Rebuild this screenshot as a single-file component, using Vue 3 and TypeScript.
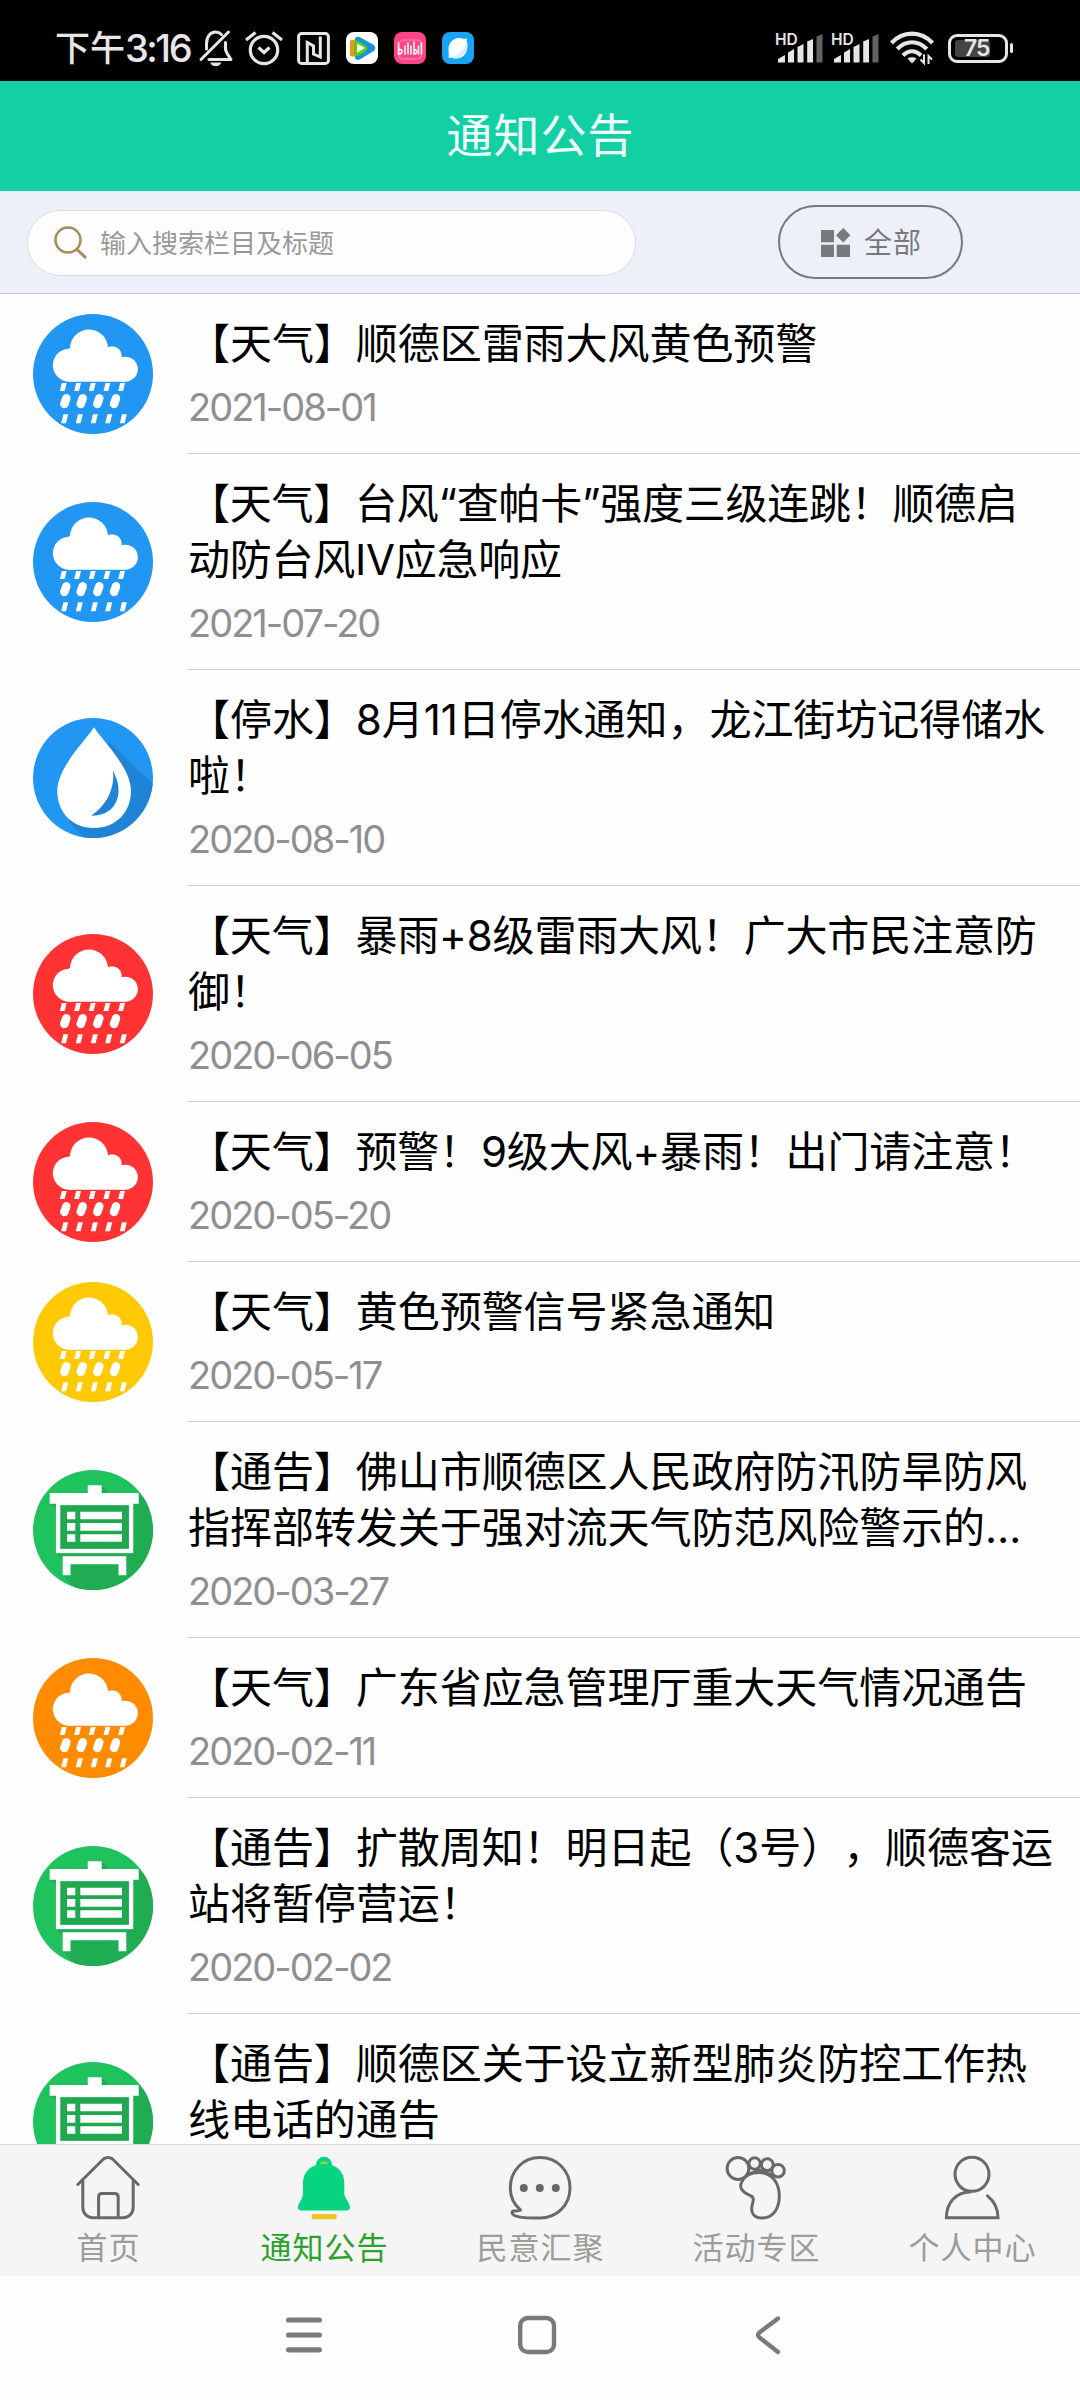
<script setup lang="ts">
type IconKind = 'rain' | 'drop' | 'board'

interface Notice {
  kind: IconKind
  color: string
  lines: string[]
  date: string
  tracking?: number
}

interface Tab {
  id: string
  label: string
}

const BLUE = '#2196f3'
const RED = '#ff3333'
const YELLOW = '#ffc905'
const ORANGE = '#ff8c00'
const GREEN = '#1fc25c'

const notices: Notice[] = [
  { kind: 'rain', color: BLUE, lines: ['【天气】顺德区雷雨大风黄色预警'], date: '2021-08-01' },
  { kind: 'rain', color: BLUE, lines: ['【天气】台风“查帕卡”强度三级连跳！顺德启', '动防台风IV应急响应'], date: '2021-07-20', tracking: -0.25 },
  { kind: 'drop', color: BLUE, lines: ['【停水】8月11日停水通知，龙江街坊记得储水', '啦！'], date: '2020-08-10' },
  { kind: 'rain', color: RED, lines: ['【天气】暴雨+8级雷雨大风！广大市民注意防', '御！'], date: '2020-06-05', tracking: -0.15 },
  { kind: 'rain', color: RED, lines: ['【天气】预警！9级大风+暴雨！出门请注意！'], date: '2020-05-20', tracking: -0.15 },
  { kind: 'rain', color: YELLOW, lines: ['【天气】黄色预警信号紧急通知'], date: '2020-05-17' },
  { kind: 'board', color: GREEN, lines: ['【通告】佛山市顺德区人民政府防汛防旱防风', '指挥部转发关于强对流天气防范风险警示的…'], date: '2020-03-27' },
  { kind: 'rain', color: ORANGE, lines: ['【天气】广东省应急管理厅重大天气情况通告'], date: '2020-02-11' },
  { kind: 'board', color: GREEN, lines: ['【通告】扩散周知！明日起（3号），顺德客运', '站将暂停营运！'], date: '2020-02-02' },
  { kind: 'board', color: GREEN, lines: ['【通告】顺德区关于设立新型肺炎防控工作热', '线电话的通告'], date: '' },
]

const tabs: Tab[] = [
  { id: 'home', label: '首页' },
  { id: 'notice', label: '通知公告' },
  { id: 'opinion', label: '民意汇聚' },
  { id: 'activity', label: '活动专区' },
  { id: 'profile', label: '个人中心' },
]
const activeTab = 'notice'

const shortTop = [30.3, 44.7, 59.3, 74, 88.7]
const longMid = [32.3, 48.7, 65.3, 82]
const shortLow = [31.7, 46.3, 61.3, 75.7, 90.3]
</script>

<template>
  <div class="screen">
    <header class="status">
      <div class="status-left">
        <span class="clock">下午<b>3:16</b></span>
        <svg class="s-mute" width="34" height="36" viewBox="0 0 34 36" fill="none" stroke="#e6e6e6" stroke-width="3" stroke-linecap="round" stroke-linejoin="round">
          <path d="M7.500 19V14C7.500 6.500 11.500 2 16.500 2C19 2 21 3 22.500 4.500M26.500 12.500V19C27 23 30 26 32 29.500H10M2 29.500L29.500 2" />
          <path d="M11 32.500H22.500C21 35.500 19 36 16.700 36C14.500 36 12.500 35.500 11 32.500Z" fill="#e6e6e6" stroke="none" />
        </svg>
        <svg class="s-alarm" width="38" height="35" viewBox="0 0 38 35" fill="none" stroke="#e6e6e6" stroke-width="3.200">
          <circle cx="19" cy="19" r="13.700" />
          <path d="M13.500 16.500L19 21.500L24.500 16.500M1 9L10.500 1.500M37 9L27.500 1.500" />
        </svg>
        <svg class="s-nfc" width="33" height="33" viewBox="0 0 33 33" fill="none" stroke="#e6e6e6" stroke-width="3">
          <rect x="1.600" y="1.600" width="29.800" height="29.800" rx="3" />
          <path d="M10.300 31V10.500L16.500 14V22L23.300 25V4.500" />
        </svg>
        <svg class="s-app" width="32" height="32" viewBox="0 0 32 32">
          <rect width="32" height="32" rx="8" fill="#fff" />
          <path d="M9 7C9 4.500 12 4 14.500 5.500L27 12.500C30 14.500 30 17.500 27 19.500L14.500 27C12 28.500 9 28 9 25.500Z" fill="#1793dc" />
          <path d="M4 10C4 8 6 7.500 8 8V24.500C6 25 4 24.500 4 22.500Z" fill="#ff8a1e" />
          <path d="M8 8C12 8.500 18 12 20.500 14.500C21.500 15.500 21.500 17 20.500 18C18 21 12 24.500 8 24.500Z" fill="#54cf10" />
          <path d="M11 11.500L19 16L11 20.800Z" fill="#fff" />
        </svg>
        <svg class="s-app" width="32" height="32" viewBox="0 0 32 32" fill="none">
          <rect width="32" height="32" rx="8" fill="#fb4687" />
          <rect x="5" y="8" width="22" height="19" rx="4" stroke="#ff6b9e" stroke-width="2" />
          <path d="M4.500 11V22C9 22 9 17 5.500 17.500M11 14V22M14 11V22M17 14V22M20 10V22C23.500 22 23.500 17.500 20.500 17.500M24.500 14V22M27.500 11V22" stroke="#fff" stroke-width="1.500" stroke-linecap="round" />
        </svg>
        <svg class="s-app" width="32" height="32" viewBox="0 0 32 32">
          <rect width="32" height="32" rx="8" fill="#18a5f8" />
          <path d="M6.500 17C6.500 11 11 6 17 6C19.500 6 21 6.500 22 7.200C23.500 6.200 25 6.500 24.800 8C24.600 9.300 25.500 11 25.500 14C25.500 21 21 26.500 14.500 26.500C12 26.500 10.500 26 9 25.500C7.500 26.500 6 26 6.600 24C7.200 22 6.500 20 6.500 17Z" fill="#fff" />
          <path d="M9 25.500C16 24 23 17 24.500 9C28 19 19 29 9 25.500Z" fill="#d9efff" />
        </svg>
      </div>
      <div class="status-right">
        <svg v-for="n in 2" :key="n" class="s-signal" width="48" height="32" viewBox="0 0 48 32" fill="#e6e6e6">
          <text x="-1" y="12.500" class="hd">HD</text>
          <path d="M2 30.500V27L9 23V30.500ZM12 30.500V20.500L18 17V30.500ZM21.500 30.500V15L27.500 12V30.500ZM31.200 30.500V9.500L37 7V30.500Z" />
          <path d="M40.500 30.500V4.500L46.500 2V30.500Z" fill="#626262" />
        </svg>
        <svg class="s-wifi" width="44" height="34" viewBox="0 0 44 34" fill="none" stroke="#e6e6e6" stroke-width="4.200">
          <path d="M1.500 12C13-.5 31-.5 42.500 12M7.200 18C16 9 28 9 36.800 18M13 24.500C18.500 19 25.500 19 31 24.500" />
          <path d="M17.500 27.500C20 25.800 24 25.800 26.500 27.500L22 32.500Z" fill="#e6e6e6" stroke="none" />
          <path d="M34 23.500V32L30.500 28.500M38.500 33V25L42 28.500" stroke-width="2" />
        </svg>
        <div class="battery"><span class="cell"><i></i><em>75</em></span><span class="nub"></span></div>
      </div>
    </header>

    <h1 class="title">通知公告</h1>

    <div class="search">
      <div class="field">
        <svg width="32" height="34" viewBox="0 0 32 34" fill="none" stroke="#a68c58" stroke-width="2.500">
          <circle cx="14" cy="14" r="12.500" />
          <path d="M22.500 23L32 32" stroke-width="3" />
        </svg>
        <span>输入搜索栏目及标题</span>
      </div>
      <div class="filter">
        <svg width="30" height="30" viewBox="0 0 30 30" fill="#777b7b">
          <path d="M0 3H13V15.300H0ZM0 17.700H13V30H0ZM15.700 17.700H29V30H15.700ZM22.300 1L29.300 8.300L22.300 15.500L15 8.300Z" />
        </svg>
        <span>全部</span>
      </div>
    </div>

    <main class="list">
      <article v-for="(item, i) in notices" :key="i" class="row">
        <svg class="badge" viewBox="0 0 120 120">
          <defs>
            <clipPath :id="'round' + i"><circle cx="60" cy="60" r="60" /></clipPath>
          </defs>
          <g :clip-path="`url(#round${i})`">
            <rect width="120" height="120" :fill="item.color" />
            <g v-if="item.kind === 'rain'" fill="#fff">
              <circle cx="56" cy="34.500" r="19" />
              <circle cx="36.300" cy="51.200" r="16.500" />
              <circle cx="79" cy="42" r="9.800" />
              <circle cx="92.300" cy="55.200" r="12.500" />
              <path d="M36 34H79V45H92V67.700H36Z" />
              <path v-for="x in shortTop" :key="'a' + x" :d="`M${x - 1.500} 69H${x + 3.300}L${x + 1.300} 77H${x - 3.500}Z`" />
              <path v-for="x in longMid" :key="'b' + x" :d="`M${x + 1} 84.300L${x - 1} 90`" stroke="#fff" stroke-width="8.500" stroke-linecap="round" />
              <path v-for="x in shortLow" :key="'c' + x" :d="`M${x - 1.300} 100.200H${x + 3.500}L${x + 1.300} 109.200H${x - 3.500}Z`" />
            </g>
            <g v-else-if="item.kind === 'drop'">
              <path d="M76 24L120 66V120H52L36 104Z" fill="#1f84d6" />
              <path d="M61 9.300C68 21 98 49 98 73C98 94 83 110 61 110C39 110 24.300 94 24.300 73C24.300 49 54 21 61 9.300Z" fill="#fff" />
              <path d="M80 52.500C84 61 86 67 85.500 74C84.500 89 74 98 58.300 97.700C72 88 82 73 80 52.500Z" fill="#1f84d6" />
            </g>
            <g v-else>
              <path d="M68.700 16L76 23H105.700L120 37V120H44L29.700 105.300L36 98L23 83L27 40L16.700 33.700Z" fill="#1fac53" />
              <rect x="25.100" y="33" width="73" height="48" fill="#1fa850" stroke="#fff" stroke-width="4.300" />
              <path d="M54.700 15.300H68.700V23H105.700V33.700H16.700V23H54.700Z" fill="#fff" />
              <path d="M34 41.700H42.300V49.300H34ZM47.300 41.700H89V49.300H47.300ZM34 53H42.300V60.700H34ZM47.300 53H89V60.700H47.300ZM34 64.200H42.300V71.800H34ZM47.300 64.200H89V71.800H47.300Z" fill="#fff" />
              <path d="M29.700 86.300H93.300V105.300H85.500V94.300H37.500V105.300H29.700Z" fill="#fff" />
            </g>
          </g>
        </svg>
        <div class="body">
          <p v-for="line in item.lines" :key="line" class="line" :style="{ letterSpacing: (item.tracking ?? -0.05) + 'px' }">{{ line }}</p>
          <time class="date">{{ item.date }}</time>
        </div>
      </article>
    </main>

    <nav class="tabs">
      <div v-for="tab in tabs" :key="tab.id" class="tab" :class="{ active: tab.id === activeTab }">
        <svg width="64" height="64" viewBox="0 0 64 64" fill="none" stroke="#696969" stroke-width="3" stroke-linecap="round" stroke-linejoin="round">
          <g v-if="tab.id === 'home'">
            <path d="M1.800 28.500L27.500 3C30 .9 34 .9 36.500 3L62.200 28.500M6.800 25V51C6.800 57.500 11 61.700 17 61.700H47C53 61.700 57.200 57.500 57.200 51V25" />
            <path d="M22.600 61V41C22.600 38.500 24 37.500 26 37.500H38.500C41 37.500 42.200 39 42.200 41V61" />
          </g>
          <g v-else-if="tab.id === 'notice'" stroke="none">
            <circle cx="32" cy="8.800" r="8" fill="#07d47f" />
            <path d="M11 27C11 15 20 8 32 8C44 8 52.300 15 52.300 27V38C53 43 58 47 58 51.500C58 53.500 56.500 54.500 54.500 54.500H9.500C7 54.500 6 53.500 6 51.500C6 47 11 43 11 38Z" fill="#07d47f" />
            <path d="M28 7.700C30 4.800 34.500 4.800 36.500 7.700Z" fill="#b8d92c" />
            <rect x="19.700" y="58" width="25" height="5.200" rx="1.500" fill="#efc52b" />
          </g>
          <g v-else-if="tab.id === 'opinion'">
            <path d="M12.500 54C6 48.500 2.300 41 2.300 32C2.300 14.500 15 1.500 32 1.500C49 1.500 62 14.500 62 32C62 49 49 61.900 32 61.900C21 62.300 11 61.500 6.500 59.500C3.500 58 3 55.300 6 55C9 54.900 11 55 12.500 54Z" />
            <g fill="#696969" stroke="none"><circle cx="15.800" cy="32" r="4" /><circle cx="31.800" cy="32" r="4" /><circle cx="47.800" cy="32" r="4" /></g>
          </g>
          <g v-else-if="tab.id === 'activity'">
            <path d="M23 17L36 12.500L50 18.500L46 21.500C39 15 29 15 22 21Z" fill="#696969" stroke="none" />
            <circle cx="14" cy="12.500" r="10.900" />
            <circle cx="30.600" cy="7.500" r="5.700" />
            <circle cx="43.300" cy="8.700" r="5.900" />
            <circle cx="54" cy="14.700" r="6.300" />
            <path d="M18 25.500C21 19.500 28 16.500 35 16.500C48 16.500 55.300 27 55.300 40C55.300 53 49 62 38 62C30 62 26.500 57 28 50C29 45.500 31 41 26 39.500C18 36 14.500 31 18 25.500Z" />
          </g>
          <g v-else>
            <circle cx="32" cy="18.300" r="17" />
            <path d="M30 36C16 36 6.400 47 6.400 61.700H58C58 52.500 54 45 47.500 39.800" stroke-linejoin="miter" />
          </g>
        </svg>
        <span>{{ tab.label }}</span>
      </div>
    </nav>

    <footer class="nav">
      <svg width="38" height="42" viewBox="0 0 38 42" stroke="#7a7a7a" stroke-width="5.200" stroke-linecap="round">
        <path d="M3.600 6H34.400M3.600 21H34.400M3.600 35.800H34.400" />
      </svg>
      <svg width="42" height="42" viewBox="0 0 42 42" fill="none" stroke="#7a7a7a" stroke-width="4.400">
        <rect x="3.200" y="4" width="33.800" height="34" rx="7.500" />
      </svg>
      <svg width="30" height="42" viewBox="0 0 30 42" fill="none" stroke="#7a7a7a" stroke-width="4.400" stroke-linecap="round" stroke-linejoin="round">
        <path d="M26 4.500L7.500 18.500C5.500 20 5.500 22 7.500 23.500L26 38" />
      </svg>
    </footer>
  </div>
</template>

<style>
body {
  background: #fff;
}
</style>

<style scoped>
.screen {
  width: 1080px;
  height: 2400px;
  display: flex;
  flex-direction: column;
  overflow: hidden;
  background: #fefefe;
  font-family: Inter, "Noto Sans CJK SC", sans-serif;
  text-spacing-trim: space-all;
}
svg {
  display: block;
  flex: none;
  overflow: visible;
}
.status {
  flex: none;
  height: 81px;
  box-sizing: border-box;
  padding: 15px 67px 0 55px;
  background: #000;
  color: #e6e6e6;
  display: flex;
  justify-content: space-between;
  align-items: center;
}
.status-left,
.status-right {
  display: flex;
  align-items: center;
}
.clock {
  display: flex;
  align-items: center;
  width: 144px;
  height: 40px;
  line-height: 40px;
  font-size: 35px;
  font-weight: 500;
  white-space: nowrap;
}
.clock b {
  font-size: 38px;
  font-weight: 500;
  letter-spacing: -2.500px;
}
.s-alarm {
  margin-left: 12px;
}
.s-nfc {
  margin-left: 14px;
}
.s-app {
  margin-left: 16px;
}
.s-signal {
  margin-right: 8px;
}
.hd {
  font: 600 15.500px Inter, sans-serif;
}
.s-wifi {
  margin-left: 2px;
}
.battery {
  display: flex;
  align-items: center;
  margin-left: 14px;
  gap: 2px;
}
.cell {
  width: 60px;
  height: 29px;
  box-sizing: border-box;
  border: 3px solid #e6e6e6;
  border-radius: 9px;
  display: grid;
  align-items: center;
  padding: 0 4px;
}
.cell i,
.cell em {
  grid-area: 1 / 1;
}
.cell i {
  width: 35px;
  height: 17px;
  border-radius: 3px;
  background: #444;
}
.cell em {
  padding-left: 9px;
  font: 600 23px/23px Inter, sans-serif;
  letter-spacing: -1px;
}
.nub {
  width: 3px;
  height: 10px;
  border-radius: 2px;
  background: #e6e6e6;
}
.title {
  flex: none;
  box-sizing: border-box;
  margin: 0;
  padding-left: 1px;
  height: 110px;
  line-height: 109px;
  background: #12cfa4;
  color: #f0fffc;
  text-align: center;
  font-size: 46px;
  font-weight: 400;
  letter-spacing: 1px;
}
.search {
  flex: none;
  height: 103px;
  box-sizing: border-box;
  border-bottom: 1px solid #c5cbd8;
  background: #edf0f8;
  display: flex;
  align-items: center;
  padding-left: 27px;
}
.field {
  width: 609px;
  height: 66px;
  margin-top: 1px;
  box-sizing: border-box;
  border: 1px solid #dadde3;
  border-radius: 33px;
  background: #fdfdfe;
  display: flex;
  align-items: center;
  padding-left: 26px;
  gap: 14px;
  color: #999;
  font-size: 26px;
}
.field span,
.filter span {
  margin-top: -3px;
}
.filter {
  margin-left: 142px;
  width: 185px;
  height: 74px;
  box-sizing: border-box;
  border: 2px solid #777a7d;
  border-radius: 37px;
  display: flex;
  align-items: center;
  padding-left: 41px;
  gap: 13px;
  color: #777a7d;
  font-size: 28px;
  letter-spacing: 1px;
}
.list {
  flex: none;
  height: 1850px;
  overflow: hidden;
}
.row {
  display: flex;
  align-items: center;
  padding-left: 33px;
  gap: 35px;
}
.badge {
  width: 120px;
  height: 120px;
}
.body {
  flex: 1;
  box-sizing: border-box;
  padding: 22px 0 22px;
  border-bottom: 1px solid #cfcfcf;
}
.line {
  margin: 0;
  height: 56px;
  line-height: 56px;
  font-size: 42px;
  color: #000;
  white-space: nowrap;
}
.date {
  display: block;
  margin-top: 11px;
  height: 48px;
  line-height: 48px;
  font-size: 38px;
  letter-spacing: -2px;
  color: #8f8f8f;
}
.tabs {
  flex: none;
  height: 132px;
  box-sizing: border-box;
  border-top: 1px solid #d6d6d6;
  background: #f5f5f5;
  display: flex;
}
.tab {
  flex: 1;
  display: flex;
  flex-direction: column;
  align-items: center;
  padding-top: 11px;
  color: #9c9c99;
  font-size: 31px;
  letter-spacing: 1px;
  line-height: 44px;
}
.tab span {
  margin-top: 6px;
  padding-left: 1px;
}
.tab.active {
  color: #2ca22c;
}
.nav {
  flex: 1;
  display: flex;
  align-items: center;
  padding: 0 298px 6px 285px;
  justify-content: space-between;
}
</style>
